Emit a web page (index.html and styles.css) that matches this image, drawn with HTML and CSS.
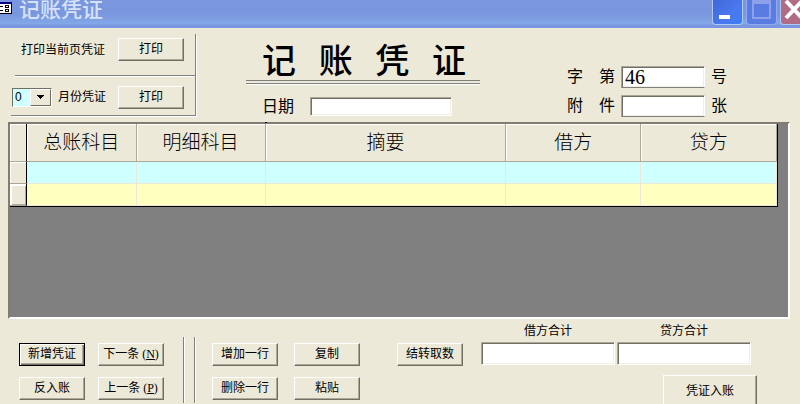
FILE: index.html
```html
<!DOCTYPE html>
<html lang="zh-CN">
<head>
    <meta charset="utf-8">
    <meta name="viewport" content="width=device-width, initial-scale=1.0">
    <title>记账凭证</title>
    <link rel="stylesheet" href="styles.css">
</head>
<body>
    <header class="titlebar">
        <svg class="form-icon" width="16" height="16" viewBox="0 0 16 16" shape-rendering="crispEdges">
            <rect y="2" width="16" height="12" fill="#000"/>
            <rect x="1" y="4" width="14" height="9" fill="#fff"/>
            <rect y="2" width="16" height="2" fill="#000080"/>
            <path d="M2 6h5v1H2zM2 10h5v1H2zM9 5h4v3H9zM9 9h4v3H9z" fill="#000"/>
            <path d="M10 6h2v1h-2zM10 10h2v1h-2z" fill="#fff"/>
        </svg>
        <h1 class="window-title">记账凭证</h1>
        <div class="window-btns">
            <button type="button" class="win-btn" aria-label="最小化">
                <svg width="28" height="24" viewBox="0 0 28 24"><path d="M6 15h11v4H6z" fill="#fff"/></svg>
            </button>
            <button type="button" class="win-btn win-max" aria-label="最大化" disabled>
                <svg width="28" height="24" viewBox="0 0 28 24"><path d="M5 0h19v19H5zM7 4v13h15V4z" fill="#8fa0ea" fill-rule="evenodd"/></svg>
            </button>
            <button type="button" class="win-btn win-close" aria-label="关闭">
                <svg width="28" height="24" viewBox="0 0 28 24"><path d="M5 1L21 18M21 1L5 18" stroke="#fff" stroke-width="4"/></svg>
            </button>
        </div>
    </header>

    <form class="voucher">
        <div class="top">
            <div class="print-panel">
                <div class="print-row">
                    <span class="print-text">打印当前页凭证</span>
                    <button type="button" class="btn">打印</button>
                </div>
                <div class="print-row month-row">
                    <span class="combo">
                        <select id="month">
                            <option>0</option>
                        </select>
                        <span class="combo-arrow"><svg width="7" height="4" viewBox="0 0 7 4" shape-rendering="crispEdges"><path d="M0 0h7v1H0zM1 1h5v1H1zM2 2h3v1H2zM3 3h1v1H3z"/></svg></span>
                    </span>
                    <label for="month">月份凭证</label>
                    <button type="button" class="btn">打印</button>
                </div>
            </div>

            <div class="heading">
                <h2 class="title"><span>记</span><span>账</span><span>凭</span><span>证</span></h2>
                <div class="date-row">
                    <label for="date">日期</label>
                    <input type="text" id="date" class="field">
                </div>
            </div>

            <div class="numbers">
                <div class="number-row">
                    <label for="number"><span>字</span><span>第</span></label>
                    <input type="text" id="number" class="field" value="46">
                    <span>号</span>
                </div>
                <div class="number-row">
                    <label for="attach"><span>附</span><span>件</span></label>
                    <input type="text" id="attach" class="field">
                    <span>张</span>
                </div>
            </div>
        </div>

        <div class="grid-frame">
            <table class="grid">
                <colgroup>
                    <col class="col-mark">
                    <col class="col-main">
                    <col class="col-detail">
                    <col class="col-summary">
                    <col class="col-debit">
                    <col class="col-credit">
                </colgroup>
                <thead>
                    <tr><th></th><th>总账科目</th><th>明细科目</th><th>摘要</th><th>借方</th><th>贷方</th></tr>
                </thead>
                <tbody>
                    <tr class="row-blue"><th></th><td></td><td></td><td></td><td></td><td></td></tr>
                    <tr class="row-yellow"><th></th><td></td><td></td><td></td><td></td><td></td></tr>
                </tbody>
            </table>
        </div>

        <div class="bottom">
            <div class="btn-grid">
                <button type="button" class="btn btn-default">新增凭证</button>
                <button type="button" class="btn">下一条 (<u>N</u>)</button>
                <button type="button" class="btn">反入账</button>
                <button type="button" class="btn">上一条 (<u>P</u>)</button>
            </div>
            <div class="divider"></div>
            <div class="btn-grid btn-grid-wide">
                <button type="button" class="btn">增加一行</button>
                <button type="button" class="btn">复制</button>
                <button type="button" class="btn">删除一行</button>
                <button type="button" class="btn">粘贴</button>
            </div>
            <button type="button" class="btn btn-carry">结转取数</button>
            <div class="totals">
                <div class="total-fields">
                    <div class="total">
                        <label for="debit">借方合计</label>
                        <input type="text" id="debit" class="field" readonly>
                    </div>
                    <div class="total">
                        <label for="credit">贷方合计</label>
                        <input type="text" id="credit" class="field" readonly>
                    </div>
                </div>
                <button type="submit" class="btn btn-post">凭证入账</button>
            </div>
        </div>
    </form>
</body>
</html>
```
FILE: styles.css
```css
* {
    box-sizing: border-box;
}

html, body {
    height: 100%;
    margin: 0;
    overflow: hidden;
}

body {
    background-color: #ece9d8;
    color: #000;
    font-family: "Liberation Serif", "Noto Sans CJK SC", sans-serif;
    font-size: 12px;
    line-height: 16px;
}

button, input, select {
    font: inherit;
    color: inherit;
    margin: 0;
    padding: 0;
    border-radius: 0;
}

/* 标题栏 */
.titlebar {
    display: flex;
    height: 28px;
    margin-right: -11px;
    background: linear-gradient(#7996de, #7996de 50%, #82a8e8 84%, #7b96e0 90%, #7b96e0);
}

.form-icon {
    margin-left: -4px;
}

.window-title {
    flex: 1;
    margin: 0 0 0 7px;
    color: #d6e2f8;
    font-size: 21px;
    font-weight: 500;
    line-height: 21px;
}

.window-btns {
    display: flex;
    gap: 3px;
}

.win-btn {
    width: 31px;
    height: 25px;
    border: 1px solid #b4c8f4;
    border-top: 0;
    border-radius: 0 0 4px 4px;
    background: linear-gradient(135deg, #3f68d8, #4a78ee 60%, #3a80f0);
}

.win-btn svg {
    display: block;
}

.win-max {
    border-color: #92acec;
    background: #5a7be2;
}

.win-close {
    background: #b06c86;
}

/* 按钮和文本框 */
.btn {
    width: 66px;
    height: 23px;
    border: 1px solid;
    border-color: #fff #716f64 #716f64 #fff;
    box-shadow: inset -1px -1px #aca899;
    background-color: #ece9d8;
    line-height: 19px;
    white-space: nowrap;
}

.btn-default {
    border-color: #000;
    box-shadow: inset 1px 1px #fff, inset -1px -1px #716f64, inset -2px -2px #aca899;
}

.field {
    border: 1px solid;
    border-color: #aca899 #fff #fff #aca899;
    box-shadow: inset 1px 1px #716f64, inset -1px -1px #f1efe2;
    background-color: #fff;
}

.top {
    display: flex;
    height: 94px;
    padding: 6px 73px 0 11px;
}

/* 打印区 */
.print-panel {
    flex: none;
    width: 185px;
    height: 82px;
    border-right: 1px solid #808080;
    border-bottom: 1px solid #808080;
    box-shadow: 1px 1px #fff;
}

.print-row {
    display: flex;
    align-items: center;
    height: 42px;
    margin-left: 4px;
    padding: 0 11px 10px 6px;
    border-bottom: 1px solid #808080;
    box-shadow: 0 1px #fff;
}

.print-row .btn {
    margin-left: auto;
}

.month-row {
    height: 40px;
    margin-left: 0;
    padding: 2px 11px 0 1px;
    border: 0;
    box-shadow: none;
}

.combo {
    position: relative;
    width: 40px;
    height: 19px;
    margin-right: 6px;
}

.combo select {
    display: block;
    width: 100%;
    height: 100%;
    padding-left: 2px;
    border: 1px solid;
    border-color: #716f64 #fff #fff #716f64;
    background-color: #d0ffff;
    appearance: none;
    font-family: "Liberation Sans", sans-serif;
    font-size: 12px;
}

.combo-arrow {
    position: absolute;
    top: 1px;
    right: 1px;
    display: flex;
    align-items: center;
    justify-content: center;
    width: 21px;
    height: 17px;
    border: 1px solid;
    border-color: #fff #716f64 #716f64 #fff;
    background-color: #ece9d8;
    pointer-events: none;
}

/* 凭证标题 */
.heading {
    flex: none;
    width: 234px;
    margin-left: 50px;
    font-size: 16px;
}

.title {
    display: flex;
    justify-content: space-between;
    height: 50px;
    margin: 0;
    padding: 10px 14px 0 16px;
    border-bottom: 4px double #808080;
    box-shadow: 0 1px #fff;
    font-size: 34px;
    font-weight: 500;
    line-height: 36px;
}

.date-row {
    display: flex;
    align-items: center;
    gap: 16px;
    margin-top: 13px;
    padding-left: 16px;
}

.date-row label {
    position: relative;
}

/* 折行冒号露出的一点 */
.date-row label::after {
    content: "";
    position: absolute;
    left: 3px;
    top: 23px;
    width: 2px;
    height: 1px;
    background-color: #000;
}

.date-row .field {
    width: 142px;
    height: 19px;
}

.numbers {
    display: flex;
    flex-direction: column;
    gap: 7px;
    margin-left: auto;
    padding-top: 32px;
    font-size: 16px;
}

.number-row {
    display: flex;
    align-items: center;
    gap: 6px;
    height: 22px;
}

.number-row label {
    display: flex;
    gap: 16px;
}

.number-row .field {
    width: 84px;
    height: 22px;
    padding-left: 3px;
    border-bottom-color: #808080;
    font-size: 20px;
}

/* 分录表格 */
.grid-frame {
    height: 197px;
    margin: 0 10px 0 8px;
    padding-right: 10px;
    border: 2px solid;
    border-color: #807d70 #fff #fff #807d70;
    background-color: #808080;
}

.grid {
    width: 100%;
    border-collapse: separate;
    border-spacing: 0;
    border-right: 1px solid #000;
    border-bottom: 1px solid #000;
    table-layout: fixed;
}

.col-mark {
    width: 17px;
}

.col-main {
    width: 14.3%;
}

.col-detail {
    width: 16.8%;
}

.col-summary {
    width: 31.4%;
}

.col-debit {
    width: 17.6%;
}

.grid th {
    padding: 0;
    border-right: 1px solid #aca899;
    border-bottom: 1px solid #aca899;
    box-shadow: inset 1px 1px #fff;
    background-color: #ece9d8;
    font-size: 19px;
    font-weight: 300;
}

.grid thead th {
    height: 38px;
}

.grid td {
    height: 22px;
    padding: 0;
    border-right: 1px solid #ece9d8;
    border-bottom: 1px solid #ece9d8;
}

.grid th:first-child {
    border-right-color: #000;
}

.row-blue td {
    background-color: #d0ffff;
}

.row-yellow td {
    background-color: #ffffc0;
}

.row-yellow th {
    box-shadow: inset 2px 2px #fff, inset -1px -1px #aca899;
}

/* 底部操作区 */
.bottom {
    display: flex;
    align-items: flex-start;
    padding: 4px 49px 0 19px;
}

.btn-grid {
    display: grid;
    flex: none;
    grid-template-columns: 66px 66px;
    gap: 11px 13px;
    padding-top: 20px;
}

.btn-grid-wide {
    column-gap: 16px;
}

.divider {
    flex: none;
    width: 13px;
    height: 66px;
    margin: 14px 16px 0 19px;
    border-left: 1px solid #808080;
    border-right: 1px solid #fff;
    box-shadow: inset 1px 0 #fff, inset -1px 0 #808080;
}

.btn-carry {
    flex: none;
    margin: 20px 18px 0 37px;
}

.totals {
    display: flex;
    flex: 1;
    flex-direction: column;
}

.total-fields {
    display: flex;
    gap: 2px;
}

.total {
    display: flex;
    flex: 1;
    flex-direction: column;
    gap: 3px;
    text-align: center;
}

.total .field {
    width: 100%;
    height: 23px;
}

.btn-post {
    align-self: flex-end;
    width: 94px;
    height: 33px;
    margin: 10px -6px 0 0;
}
```
